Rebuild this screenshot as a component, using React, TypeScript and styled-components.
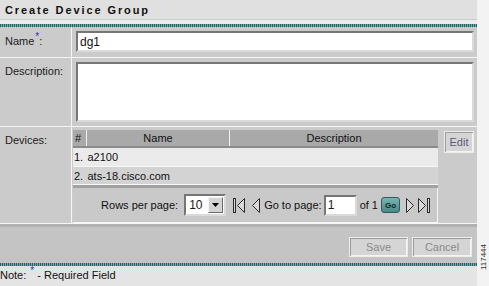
import styled, { createGlobalStyle } from 'styled-components';

const Global = createGlobalStyle`
  html, body { margin: 0; padding: 0; background: #f3f3f3; }
  body { font-family: "Liberation Sans", Arial, sans-serif; font-size: 11px; color: #1a1a1a; }
`;

const Page = styled.div`
  display: flex;
  width: 489px;
  height: 286px;
  overflow: hidden;
`;

const Main = styled.div`
  width: 477px;
  display: flex;
  flex-direction: column;
  background: #e3e3e3;
`;

const Side = styled.div`
  flex: 1;
  display: flex;
  align-items: flex-end;
  justify-content: flex-end;
  padding-bottom: 16px;
  background: #f3f3f3;
`;

const FigureId = styled.span`
  writing-mode: vertical-rl;
  transform: rotate(180deg);
  font-size: 8px;
  line-height: 8px;
  color: #333;
  margin-right: 1px;
`;

const TitleBar = styled.div`
  height: 19px;
  display: flex;
  align-items: center;
  padding-left: 5px;
  background: #e0e0e0;
  border-bottom: 1px solid #c5cec7;
`;

const Title = styled.h1`
  margin: 0;
  font-size: 11px;
  font-weight: bold;
  letter-spacing: 1.9px;
  color: #111;
`;

const Spacer = styled.div<{ $h: number; $bg: string }>`
  height: ${(p) => p.$h}px;
  background: ${(p) => p.$bg};
`;

const TealRule = styled.div`
  height: 3px;
  background: repeating-linear-gradient(90deg, #1f6767 0 1px, #74a9a9 1px 2px);
`;

const Hatch = styled.div`
  height: 1px;
  background: repeating-linear-gradient(90deg, #aeb8b8 0 1px, #dcdcdc 1px 2px);
`;

const Form = styled.div`
  display: grid;
  grid-template-columns: 71px 1fr;
  grid-template-rows: 29px 68px 96px;
  gap: 1px;
  padding-bottom: 1px;
  background: #f6f6f6;
`;

const Label = styled.div`
  background: #cbcbcb;
  padding: 6px 0 0 5px;
  line-height: 14px;
  color: #222;
`;

const Req = styled.sup`
  color: #3030c8;
  font-size: 10px;
  vertical-align: 5px;
  line-height: 0;
  margin: 0 0 0 1px;
`;

const Value = styled.div<{ $top: number }>`
  background: #cbcbcb;
  padding: ${(p) => p.$top}px 6px 0 4px;
`;

const bevelIn = `
  border-style: solid;
  border-width: 2px;
  border-color: #767676 #dadada #dadada #767676;
  background: #fff;
  box-sizing: border-box;
`;

const TextInput = styled.input`
  ${bevelIn}
  display: block;
  width: 100%;
  height: 21px;
  margin: 0;
  padding: 0 2px;
  font-family: "Liberation Sans", Arial, sans-serif;
  font-size: 12px;
  color: #111;
  outline: none;
`;

const TextArea = styled.textarea`
  ${bevelIn}
  display: block;
  width: 100%;
  height: 60px;
  margin: 0;
  resize: none;
  outline: none;
`;

const DevicesRow = styled.div`
  display: flex;
  align-items: flex-start;
  margin-left: -3px;
`;

const TableBox = styled.div`
  width: 365px;
  display: flex;
  flex-direction: column;
`;

const Grid = styled.table`
  width: 100%;
  border-collapse: collapse;
  table-layout: fixed;
`;

const Th = styled.th<{ $w?: number }>`
  width: ${(p) => (p.$w ? `${p.$w}px` : 'auto')};
  height: 16px;
  padding: 0;
  background: #a9a9a9;
  border-bottom: 2px solid #8b8b8b;
  border-left: 1px solid #f2f2f2;
  font-weight: normal;
  font-size: 11px;
  color: #111;
  text-align: center;
  &:first-child { border-left: none; text-align: left; padding-left: 2px; }
`;

const Tr = styled.tr<{ $alt?: boolean }>`
  background: ${(p) => (p.$alt ? '#d3d3d3' : '#ebebeb')};
  border-bottom: 1px solid #f7f7f7;
`;

const Td = styled.td<{ $h: number }>`
  height: ${(p) => p.$h}px;
  padding: 0 0 0 1px;
  font-size: 11px;
  color: #111;
  white-space: nowrap;
  &:first-child { padding-left: 1px; }
`;

const Band = styled.div`
  height: 3px;
  background: #a2a2a2;
`;

const Pager = styled.div`
  height: 34px;
  display: flex;
  align-items: center;
  justify-content: flex-end;
  padding-right: 7px;
  background: #c9c9c9;
  border-right: 1px solid #f6f6f6;
  border-bottom: 1px solid #f6f6f6;
`;

const PagerText = styled.span<{ $ml?: number }>`
  margin-left: ${(p) => p.$ml ?? 0}px;
  font-size: 11px;
  color: #111;
`;

const Select = styled.div`
  ${bevelIn}
  margin-left: 6px;
  width: 42px;
  height: 22px;
  display: flex;
  align-items: center;
  justify-content: space-between;
  padding-left: 3px;
  font-size: 12px;
`;

const DropButton = styled.span`
  width: 15px;
  height: 16px;
  margin-right: 1px;
  display: flex;
  align-items: center;
  justify-content: center;
  background: #d4d4d4;
  border-style: solid;
  border-width: 1px;
  border-color: #f4f4f4 #6a6a6a #6a6a6a #f4f4f4;
  box-sizing: border-box;
`;

const PageInput = styled.div`
  ${bevelIn}
  margin-left: 2px;
  width: 33px;
  height: 21px;
  padding-left: 2px;
  font-size: 12px;
  line-height: 17px;
`;

const GoButton = styled.span`
  margin-left: 3px;
  width: 19px;
  height: 16px;
  box-sizing: border-box;
  display: flex;
  align-items: center;
  justify-content: center;
  border: 1px solid #2d5d5c;
  border-radius: 3px;
  background: linear-gradient(#7bb3b1, #4a8887);
  font-size: 8px;
  font-weight: bold;
  color: #0c2a2a;
`;

const NavIcon = styled.svg<{ $ml: number }>`
  margin-left: ${(p) => p.$ml}px;
  display: block;
`;

const GhostButton = styled.span<{ $w: number; $h: number; $ink: string }>`
  width: ${(p) => p.$w}px;
  height: ${(p) => p.$h}px;
  box-sizing: border-box;
  display: flex;
  align-items: center;
  justify-content: center;
  background: #d5d5d5;
  border: 1px solid #ededed;
  box-shadow: inset 1px 1px #9c9c9c, inset -1px -1px #f4f4f4;
  font-size: 11px;
  color: ${(p) => p.$ink};
`;

const EditSlot = styled.div`
  margin-left: 6px;
  margin-top: 1px;
`;

const Footer = styled.div`
  height: 23px;
  display: flex;
  justify-content: flex-end;
  gap: 4px;
  padding: 10px 5px 3px 0;
  background: #c4c4c4;
  border-top: 3px solid #b1b1b1;
`;

const Note = styled.div`
  flex: 1;
  padding-top: 2px;
  line-height: 14px;
  font-size: 11px;
  color: #111;
  background: #e4e4e4;
`;

const NavArrow = ({ dir, bar, ml }: { dir: 'l' | 'r'; bar?: boolean; ml: number }) => {
  const w = bar ? 12 : 9;
  const tri =
    dir === 'l'
      ? bar
        ? '11.5,0.5 4.5,7.5 11.5,14.5'
        : '8.5,0.5 1.5,7.5 8.5,14.5'
      : '0.5,0.5 7.5,7.5 0.5,14.5';
  return (
    <NavIcon $ml={ml} width={w} height={15} viewBox={`0 0 ${w} 15`}>
      <polygon points={tri} fill="#d8d8d8" stroke="#2a2a2a" strokeWidth="1" />
      {bar && (
        <rect
          x={dir === 'l' ? 0.5 : 9.5}
          y={0.5}
          width={2}
          height={14}
          fill="#d8d8d8"
          stroke="#2a2a2a"
          strokeWidth="1"
        />
      )}
    </NavIcon>
  );
};

const devices = [
  { n: '1.', name: 'a2100', desc: '' },
  { n: '2.', name: 'ats-18.cisco.com', desc: '' },
];

export default function App() {
  return (
    <Page>
      <Global />
      <Main>
        <TitleBar>
          <Title>Create Device Group</Title>
        </TitleBar>
        <Spacer $h={4} $bg="#ececec" />
        <TealRule />
        <Hatch />
        <Form>
          <Label>
            Name<Req>*</Req>:
          </Label>
          <Value $top={3}>
            <TextInput defaultValue="dg1" />
          </Value>

          <Label>Description:</Label>
          <Value $top={4}>
            <TextArea />
          </Value>

          <Label>Devices:</Label>
          <Value $top={3}>
            <DevicesRow>
              <TableBox>
                <Grid>
                  <thead>
                    <tr>
                      <Th $w={11}>#</Th>
                      <Th $w={142}>Name</Th>
                      <Th>Description</Th>
                    </tr>
                  </thead>
                  <tbody>
                    {devices.map((d, i) => (
                      <Tr key={d.n} $alt={i % 2 === 1}>
                        <Td $h={i === 0 ? 18 : 17}>{d.n}</Td>
                        <Td $h={i === 0 ? 18 : 17}>{d.name}</Td>
                        <Td $h={i === 0 ? 18 : 17}>{d.desc}</Td>
                      </Tr>
                    ))}
                  </tbody>
                </Grid>
                <Band />
                <Pager>
                  <PagerText>Rows per page:</PagerText>
                  <Select>
                    10
                    <DropButton>
                      <svg width="7" height="4" viewBox="0 0 7 4">
                        <polygon points="0,0 7,0 3.5,4" fill="#000" />
                      </svg>
                    </DropButton>
                  </Select>
                  <NavArrow dir="l" bar ml={7} />
                  <NavArrow dir="l" ml={6} />
                  <PagerText $ml={4}>Go to page:</PagerText>
                  <PageInput>1</PageInput>
                  <PagerText $ml={3}>of 1</PagerText>
                  <GoButton>Go</GoButton>
                  <NavArrow dir="r" ml={6} />
                  <NavArrow dir="r" bar ml={3} />
                </Pager>
              </TableBox>
              <EditSlot>
                <GhostButton $w={30} $h={22} $ink="#5b5b80">
                  Edit
                </GhostButton>
              </EditSlot>
            </DevicesRow>
          </Value>
        </Form>
        <Footer>
          <GhostButton $w={59} $h={20} $ink="#8a8a8a">
            Save
          </GhostButton>
          <GhostButton $w={60} $h={20} $ink="#8a8a8a">
            Cancel
          </GhostButton>
        </Footer>
        <TealRule />
        <Note>
          Note: <Req>*</Req> - Required Field
        </Note>
      </Main>
      <Side>
        <FigureId>117444</FigureId>
      </Side>
    </Page>
  );
}
